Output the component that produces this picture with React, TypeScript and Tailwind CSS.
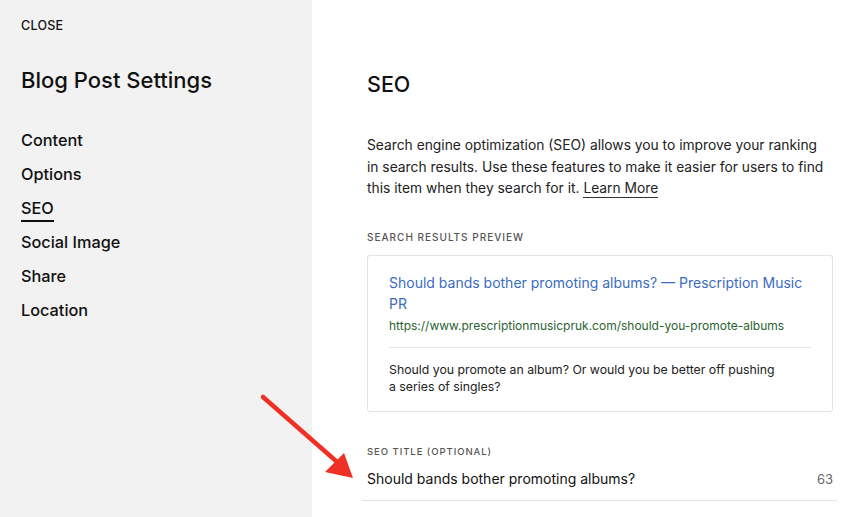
import React from "react";

const navItems = ["Content", "Options", "SEO", "Social Image", "Share", "Location"];

function Sidebar() {
  return (
    <aside className="w-[312px] shrink-0 bg-[#f2f2f2] px-[21px] pt-[12px]">
      <button className="text-[12.5px] font-medium tracking-[0.02em] text-[#111] leading-[16px]">CLOSE</button>
      <h1 className="mt-[30px] text-[22px] font-medium leading-[28px] text-[#111]">Blog Post Settings</h1>
      <nav className="mt-[34px] flex flex-col gap-[10px]">
        {navItems.map((item) => (
          <div key={item} className="h-[24px]">
            <span
              className={
                "inline-block text-[16.3px] font-medium leading-[22px] text-[#111] " +
                (item === "SEO" ? "border-b-2 border-[#111] pb-[1px]" : "")
              }
            >
              {item}
            </span>
          </div>
        ))}
      </nav>
    </aside>
  );
}

function Arrow() {
  return (
    <svg className="absolute left-[250px] top-[385px]" width="120" height="100" viewBox="0 0 120 100">
      <line x1="13" y1="12" x2="86" y2="76" stroke="#ee3124" strokeWidth="4.5" strokeLinecap="round" />
      <polygon points="103,93 75,87 94,68" fill="#ee3124" />
    </svg>
  );
}

function SeoPanel() {
  return (
    <main className="flex-1 bg-white pl-[55px] pr-[20px] pt-[70px]">
      <h2 className="text-[21.5px] font-medium leading-[28px] text-[#111]">SEO</h2>
      <p className="mt-[37px] w-[480px] text-[13.8px] leading-[21.5px] text-[#222]">
        Search engine optimization (SEO) allows you to improve your ranking
        <br />
        in search results. Use these features to make it easier for users to find
        <br />
        this item when they search for it.{" "}
        <a className="border-b border-[#333] pb-[1px]">Learn More</a>
      </p>
      <div className="mt-[30px] text-[10px] font-medium tracking-[0.1em] text-[#555] leading-[14px]">SEARCH RESULTS PREVIEW</div>
      <div className="mt-[11px] w-[466px] rounded-[3px] border border-[#e3e3e3] px-[21px] pt-[16px] pb-[16px]">
        <div className="text-[14px] leading-[21px] text-[#3b6cc0]">
          Should bands bother promoting albums? — Prescription Music PR
        </div>
        <div className="mt-[3px] text-[12px] leading-[18px] text-[#2b6230]">
          https://www.prescriptionmusicpruk.com/should-you-promote-albums
        </div>
        <div className="mt-[12px] border-t border-[#e6e6e6]"></div>
        <p className="mt-[13px] pr-[30px] text-[12.3px] leading-[17px] text-[#222]">
          Should you promote an album? Or would you be better off pushing a series of singles?
        </p>
      </div>
      <div className="mt-[33px] text-[9.5px] font-medium tracking-[0.1em] text-[#555] leading-[14px]">SEO TITLE (OPTIONAL)</div>
      <div className="-ml-[5px] mt-[10px] flex w-[475px] items-center justify-between border-b border-[#e3e3e3] pb-[11px] pl-[5px] pr-[4px]">
        <span className="text-[14px] leading-[20px] text-[#111]">Should bands bother promoting albums?</span>
        <span className="text-[13px] leading-[20px] text-[#666]">63</span>
      </div>
    </main>
  );
}

export default function App() {
  return (
    <div className="relative flex h-[517px] w-[857px] overflow-hidden" style={{ fontFamily: "Inter, 'Liberation Sans', sans-serif" }}>
      <Sidebar />
      <SeoPanel />
      <Arrow />
    </div>
  );
}
